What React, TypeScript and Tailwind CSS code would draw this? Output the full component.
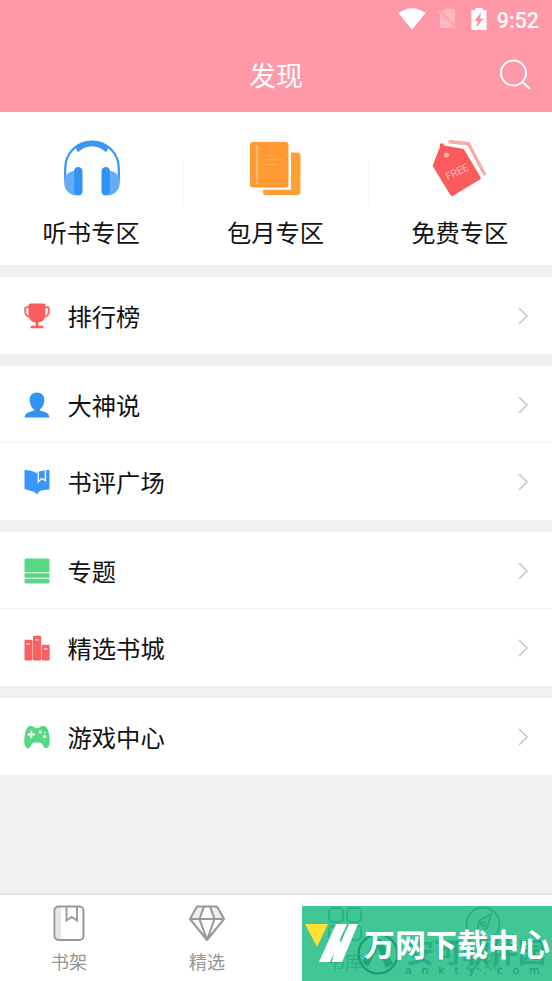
import type { ReactNode } from 'react';

const iconClass = 'block w-[26px] h-[26px] shrink-0';

function HeadphonesIcon() {
  return (
    <svg className="block w-[56px] h-[58px]" viewBox="0 0 56 58" fill="none">
      <path d="M1.200 42V29C1.200 13 13 1.500 28 1.500S54.800 13 54.800 29v13" stroke="#3a96f4" strokeWidth="2.200" />
      <path d="M11.500 7.500C21-1.500 35-1.500 44.500 7.500l-2.500 4.800C34 4.300 22 4.300 14 12.300z" fill="#3a96f4" />
      <path d="M12 30.500C4 31 .2 36 .2 42.500S4 54.500 12 55.500zM44 30.500c8 .5 11.800 5.500 11.800 12s-3.800 12-11.800 13z" fill="#66adf8" />
      <rect x="10" y="27" width="8.500" height="28.500" rx="4.250" fill="#3193f8" />
      <rect x="37.500" y="27" width="8.500" height="28.500" rx="4.250" fill="#3193f8" />
    </svg>
  );
}

function BooksIcon() {
  return (
    <svg className="mr-[2px] block w-[52px] h-[56px]" viewBox="0 0 52 56" fill="none">
      <path d="M42 10.500h6.500a3 3 0 0 1 3 3v36.500a3 3 0 0 1-3 3H17a3 3 0 0 1-3-3v-2.200h28z" fill="#ffa034" />
      <rect x="1" y="0" width="38.500" height="45.500" rx="3" fill="#ff9a32" />
      <path d="M8 3v39" stroke="#ffb974" strokeWidth="2.400" />
      <path d="M15 13h9M15 17.500h18M15 22.500h13" stroke="#ffb05d" strokeWidth="1.200" />
    </svg>
  );
}

function FreeTagIcon() {
  return (
    <svg className="block w-[56px] h-[60px]" viewBox="0 0 56 60" fill="none">
      <path d="M16.500 1.500l20 2.200 16.500 31.500" stroke="#f9aaaa" strokeWidth="3.400" />
      <path d="M8 6.500c-1.300-3.500 3.500-4.500 4-1L30.500 8.800c1 .2 1.600.8 2.100 1.700L48.500 37c.6 1 .3 2-.6 2.500L21 55.700c-1 .6-2 .3-2.600-.7L1.200 27c-.5-.8-.6-1.500-.2-2.300z" fill="#fb5b5c" />
      <circle cx="14.500" cy="15" r="2.600" fill="#fca0a0" />
      <text x="25" y="35.500" transform="rotate(-26 25 32)" textAnchor="middle" fontFamily="Roboto, sans-serif" fontSize="10.500" fill="#ffb9b9">FREE</text>
    </svg>
  );
}

function TrophyIcon() {
  return (
    <svg className={iconClass} viewBox="0 0 26 26" fill="none">
      <path d="M6 4.300H2.700q-1.500 0-1.500 1.500V8c0 3.500 2.300 6 5.800 6.300M20 4.300h3.300q1.500 0 1.500 1.500V8c0 3.500-2.300 6-5.800 6.300" stroke="#fb6868" strokeWidth="1.900" />
      <path d="M6 .5h14Q21.500.5 21.500 2v8.500c0 5.500-3 8.500-7.200 9.200v3.100H18q1.500 0 1.500 1.200v1.200h-13V24q0-1.200 1.500-1.200h3.700v-3.100c-4.200-.7-7.200-3.700-7.200-9.200V2Q4.500.5 6 .5z" fill="#fb5d5e" />
    </svg>
  );
}

function UserIcon() {
  return (
    <svg className={iconClass} viewBox="0 0 26 26" fill="#3193f4">
      <path d="M13 .5c4.500 0 7.500 3 7.300 7.800-.1 4-1.600 7.200-4.300 9v1.500c4 1 8.800 1.500 9.500 6.700H.5c.7-5.200 5.500-5.700 9.500-6.700v-1.500c-2.700-1.800-4.200-5-4.300-9C5.500 3.500 8.500.5 13 .5z" />
    </svg>
  );
}

function ReviewIcon() {
  return (
    <svg className={iconClass} viewBox="0 0 26 26">
      <path d="M.5 1C5 1 9 2 12.500 4 16 1.800 20 1 25.500 1v19.500c-4.500.2-7.500.5-10 1.700L12.800 25.500l-2.300-2.500L.5 20z" fill="#3997fb" />
      <path d="M14.300 3.200v9.600l3.400-3.300 3.700 2V1.500" fill="#3997fb" stroke="#fff" strokeWidth="1.400" />
    </svg>
  );
}

function TopicIcon() {
  return (
    <svg className={iconClass} viewBox="0 0 26 26" fill="#57d983">
      <rect x=".5" y=".5" width="25" height="13.800" rx="1.500" />
      <rect x=".5" y="15.300" width="25" height="4.500" rx="1" />
      <rect x=".5" y="20.800" width="25" height="4.700" rx="1" />
    </svg>
  );
}

function StoreIcon() {
  return (
    <svg className={iconClass} viewBox="0 0 26 26" fill="#fa6062">
      <rect x=".5" y="4.800" width="8" height="20.700" rx="1.300" />
      <rect x="9" y=".8" width="8.200" height="24.700" rx="1.300" />
      <rect x="17.700" y="9.800" width="8" height="15.700" rx="1.300" />
      <path d="M2.500 9H6M11 4.800h4M20 14h3.500" stroke="#ffd9d9" strokeWidth="1.500" />
    </svg>
  );
}

function GamepadIcon() {
  return (
    <svg className={iconClass} viewBox="0 0 26 26" fill="#57d882">
      <path d="M5 2.300c2-.8 4-.3 5 .6.500.6 1 .8 3 .8s2.500-.2 3-.8c1-.9 3-1.400 5-.6 3 1.200 4.700 8 4.700 14.500 0 5-1.500 7.400-3.500 7.400-3.200 0-3-5-5.700-5.500-2.300-.3-4.700-.3-7 0-2.700.5-2.500 5.500-5.700 5.500-2 0-3.500-2.400-3.500-7.400C.3 10.300 2 3.500 5 2.300z" />
      <path d="M7.300 6.800v7.400M3.600 10.500H11" stroke="#fff" strokeWidth="1.900" />
      <circle cx="16.500" cy="8" r="1.800" fill="#d6f6e1" />
      <circle cx="21" cy="8.500" r="1.100" fill="#a5ebbe" />
      <circle cx="20.500" cy="12.500" r="1.800" fill="#d6f6e1" />
    </svg>
  );
}

function StatusBar() {
  return (
    <div className="flex h-[38px] items-center justify-end pr-[13px] text-white">
      <svg className="mr-3 block h-[22px] w-[28px]" viewBox="0 0 28 22" fill="currentColor">
        <path d="M.5 5Q14-4.500 27.500 5L14 21.700z" />
      </svg>
      <svg className="mr-[13px] block h-[22px] w-[20px]" viewBox="0 0 20 22">
        <path d="M7 1h8q2 0 2 2v17H2V6z" fill="#ffb7c3" />
        <path d="M0 1.500l19 19.500" stroke="#ff99a8" strokeWidth="3" />
        <path d="M0 3l18.500 18" stroke="#ffb7c3" strokeWidth="1.200" />
      </svg>
      <svg className="mr-[10px] block h-[22px] w-[16px]" viewBox="0 0 16 22">
        <path d="M4.500 0h7v2H15.500V22H.5V2h4z" fill="#fff" />
        <path d="M10 4.500L3.500 13h3.300L5.500 19.500l7-9H9z" fill="#ff8da0" />
      </svg>
      <span className="pt-[3px] font-[Roboto,sans-serif] text-[21.500px] leading-none font-medium">9:52</span>
    </div>
  );
}

function Zone({ icon, label }: { icon: ReactNode; label: string }) {
  return (
    <div className="flex flex-1 flex-col items-center">
      <div className="flex h-[62px] items-start justify-center">{icon}</div>
      <span className="mt-[12px] mr-px text-[24.300px] leading-[36px]">{label}</span>
    </div>
  );
}

function Row({ icon, label, line = false }: { icon: ReactNode; label: string; line?: boolean }) {
  return (
    <div className={`flex h-[77px] items-center bg-white pr-[23px] pl-6 ${line ? 'shadow-[inset_0_-1px_0_#f3f3f3]' : ''}`}>
      {icon}
      <span className="ml-[17.500px] flex-1 text-[24.300px] leading-[36px]">{label}</span>
      <svg className="block h-[18px] w-[12px]" viewBox="0 0 12 18" fill="none" stroke="#c8c8c8" strokeWidth="1.600">
        <path d="M2 1l8 8-8 8" />
      </svg>
    </div>
  );
}

function Tab({ icon, label }: { icon: ReactNode; label: string }) {
  return (
    <div className="flex flex-1 flex-col items-center pt-[9px]">
      {icon}
      <span className="mt-[6px] text-[18px] leading-[26px] text-[#949494]">{label}</span>
    </div>
  );
}

function ShelfIcon() {
  return (
    <svg className="block h-[38px] w-[36px]" viewBox="0 0 36 38" fill="none" stroke="#999" strokeWidth="2">
      <path d="M5 3h5v32H5z" fill="#e5e5e5" stroke="none" />
      <rect x="3.500" y="2.500" width="29" height="33.500" rx="4" />
      <path d="M15.500 2.500v14l5.200-3.500 5.300 3.500v-14" strokeWidth="1.900" />
    </svg>
  );
}

function DiamondIcon() {
  return (
    <svg className="block h-[38px] w-[36px]" viewBox="0 0 36 38" fill="none" stroke="#999" strokeWidth="2.100" strokeLinejoin="round">
      <path d="M8.500 2.500h6L11 15H1zM27.500 2.500h-6L25 15h10z" fill="#eee" stroke="none" />
      <path d="M8 2.500h20L35 15 18 36 1 15zM1 15h34M15 2.500L10.500 15 18 36l7.500-21L21 2.500" />
    </svg>
  );
}

function LibraryIcon() {
  return (
    <svg className="block h-[38px] w-[36px]" viewBox="0 0 36 38" fill="none" stroke="#999" strokeWidth="2">
      <rect x="2" y="4" width="14" height="14" rx="4" />
      <rect x="20" y="4" width="14" height="14" rx="4" />
      <rect x="2" y="22" width="14" height="14" rx="4" />
      <rect x="20" y="22" width="14" height="14" rx="4" />
    </svg>
  );
}

function CompassIcon() {
  return (
    <svg className="block h-[38px] w-[36px]" viewBox="0 0 36 38" fill="none" stroke="#888" strokeWidth="2">
      <circle cx="18" cy="20" r="16.500" />
      <path d="M26 10l-4 14-10 6 2-13z" />
      <circle cx="18" cy="20" r="2" />
    </svg>
  );
}

function Banner() {
  return (
    <div className="absolute right-0 bottom-0 h-[75px] w-[250px] overflow-hidden bg-[#12b87b]/80">
      {/* faint mark under the main title */}
      <svg className="absolute top-[26px] left-[54px] h-[44px] w-[44px]" viewBox="0 0 44 44" fill="none">
        <circle cx="22" cy="22" r="19.500" stroke="#159c78" strokeWidth="2.200" />
        <path d="M20 7h5l12 25-7 4-8-20-10 19-6-5z" fill="#21a780" />
      </svg>
      <span className="absolute top-[27px] left-[104px] text-[28px] leading-[36px] font-bold whitespace-nowrap text-[#25ae85]">
        安可软件园
      </span>
      <span className="absolute top-[58px] left-[103px] font-['DejaVu_Sans',sans-serif] text-[11px] leading-[14px] tracking-[9.800px] whitespace-nowrap text-[#199d77]">
        ankty.com
      </span>
      <svg className="absolute top-[17px] left-[3px] h-[42px] w-[54px]" viewBox="0 0 54 42">
        <path d="M0 1h23L12 24z" fill="#ffe033" />
        <path d="M31 1h11L25 39H14z" fill="#fff" />
        <path d="M44 1h9L37 39H27z" fill="#fff" />
        <path d="M27 10l5-2 7 22-2 9H27l2-9z" fill="#fff" />
      </svg>
      <span className="absolute top-[17px] left-[62px] text-[31px] leading-[40px] font-bold whitespace-nowrap text-white">
        万网下载中心
      </span>
    </div>
  );
}

export default function App() {
  return (
    <div className="relative flex h-[981px] w-[552px] flex-col overflow-hidden bg-[#f1f1f1] font-['Noto_Sans_CJK_SC',sans-serif] text-[#111]">
      <header className="h-[112px] bg-[#ff99a8]">
        <StatusBar />
        <div className="grid h-[74px] grid-cols-3 items-center pr-[20px] pl-[20px] text-white">
          <h1 className="col-start-2 text-center text-[27px] leading-[36px]">发现</h1>
          <svg className="block h-[32px] w-[32px] justify-self-end" viewBox="0 0 32 32" fill="none" stroke="currentColor" strokeWidth="2">
            <circle cx="13.500" cy="14" r="12.500" />
            <path d="M22 22.500l8 7.500" />
          </svg>
        </div>
      </header>

      {/* Featured zones */}
      <section className="flex h-[153px] items-start bg-white pt-[28px]">
        <Zone icon={<HeadphonesIcon />} label="听书专区" />
        <div className="mt-[20px] h-[46px] w-px bg-[#f5f5f5]" />
        <Zone icon={<div className="pt-[2px]"><BooksIcon /></div>} label="包月专区" />
        <div className="mt-[20px] h-[46px] w-px bg-[#f5f5f5]" />
        <Zone icon={<FreeTagIcon />} label="免费专区" />
      </section>

      {/* Menu groups */}
      <main className="flex flex-1 flex-col gap-3 pt-3">
        <section>
          <Row icon={<TrophyIcon />} label="排行榜" />
        </section>
        <section>
          <Row icon={<UserIcon />} label="大神说" line />
          <Row icon={<ReviewIcon />} label="书评广场" />
        </section>
        <section>
          <Row icon={<TopicIcon />} label="专题" line />
          <Row icon={<StoreIcon />} label="精选书城" />
        </section>
        <section>
          <Row icon={<GamepadIcon />} label="游戏中心" />
        </section>
      </main>

      <nav className="flex h-[88px] border-t-2 border-[#e2e2e2] bg-white">
        <Tab icon={<ShelfIcon />} label="书架" />
        <Tab icon={<DiamondIcon />} label="精选" />
        <Tab icon={<LibraryIcon />} label="书库" />
        <Tab icon={<CompassIcon />} label="发现" />
      </nav>
      <Banner />
    </div>
  );
}
